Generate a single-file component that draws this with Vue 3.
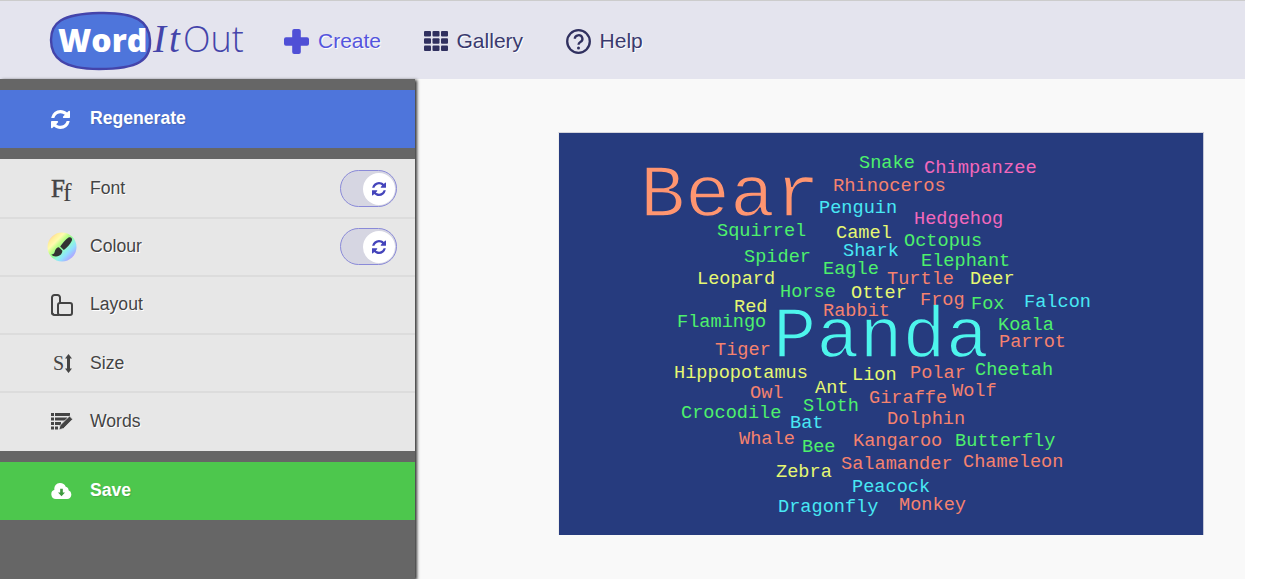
<script setup>
// Word cloud layout: x = left edge, y = baseline, both relative to the canvas.
const green = '#4df06c'
const salmon = '#f5826e'
const cyan = '#48e8f4'
const pink = '#f268bc'
const yellow = '#e6f872'
const raw = [
  ['Bear', 640, 216, 75, '#ff9570'], ['Panda', 773, 357, 72, '#4df5ec'],
  ['Snake', 859, 168, 18.6, green], ['Chimpanzee', 924, 173, 18.8, pink], ['Rhinoceros', 833, 191, 18.8, salmon],
  ['Penguin', 819, 213, 18.6, cyan], ['Hedgehog', 914, 224, 18.6, pink], ['Squirrel', 717, 236, 18.6, green],
  ['Camel', 836, 238, 18.6, yellow], ['Octopus', 904, 246, 18.6, green], ['Shark', 843, 256, 18.6, cyan],
  ['Spider', 744, 262, 18.6, green], ['Elephant', 921, 266, 18.6, green], ['Eagle', 823, 274, 18.6, green],
  ['Leopard', 697, 284, 18.6, yellow], ['Turtle', 887, 284, 18.6, salmon], ['Deer', 970, 284, 18.6, yellow],
  ['Horse', 780, 297, 18.6, green], ['Otter', 851, 298, 18.6, yellow], ['Frog', 920, 305, 18.6, salmon],
  ['Fox', 971, 309, 18.6, green], ['Falcon', 1024, 307, 18.6, cyan], ['Red', 734, 312, 18.6, yellow],
  ['Rabbit', 823, 316, 18.6, salmon], ['Flamingo', 677, 327, 18.6, green], ['Koala', 998, 330, 18.6, green],
  ['Parrot', 999, 347, 18.6, salmon], ['Tiger', 715, 355, 18.6, salmon], ['Hippopotamus', 674, 378, 18.6, yellow],
  ['Lion', 852, 380, 18.6, yellow], ['Polar', 910, 378, 18.6, salmon], ['Cheetah', 975, 375, 18.6, green],
  ['Owl', 750, 398, 18.6, salmon], ['Ant', 815, 393, 18.6, yellow], ['Giraffe', 869, 403, 18.6, salmon],
  ['Wolf', 952, 396, 18.6, salmon], ['Sloth', 803, 411, 18.6, green], ['Crocodile', 681, 418, 18.6, green],
  ['Bat', 790, 428, 18.6, cyan], ['Dolphin', 887, 424, 18.6, salmon], ['Whale', 739, 444, 18.6, salmon],
  ['Bee', 802, 452, 18.6, green], ['Kangaroo', 853, 446, 18.6, salmon], ['Butterfly', 955, 446, 18.6, green],
  ['Salamander', 841, 469, 18.6, salmon], ['Chameleon', 963, 467, 18.6, salmon], ['Zebra', 776, 477, 18.6, yellow],
  ['Peacock', 852, 492, 18.6, cyan], ['Monkey', 899, 510, 18.6, salmon], ['Dragonfly', 778, 512, 18.6, cyan],
]
const words = raw.map(([text, x, y, size, fill]) => ({ text, x: x - 559, y: y - 133, size, fill, big: size > 30 }))

const refresh = 'M1639 1056q0 5-1 7-64 268-268 434.5t-478 166.5q-146 0-282.5-55t-243.5-157l-129 129q-19 19-45 19t-45-19-19-45v-448q0-26 19-45t45-19h448q26 0 45 19t19 45-19 45l-137 137q71 66 161 102t187 36q134 0 250-65t186-179q11-17 53-117 8-23 30-23h192q13 0 22.5 9.5t9.5 22.5zm25-800v448q0 26-19 45t-45 19h-448q-26 0-45-19t-19-45 19-45l138-138q-148-137-349-137-134 0-250 65t-186 179q-11 17-53 117-8 23-30 23h-199q-13 0-22.5-9.5t-9.5-22.5v-7q65-268 270-434.5t480-166.5q146 0 284 55.5t245 156.5l130-129q19-19 45-19t45 19 19 45z'
</script>

<template>
  <div class="page">
    <header class="topbar">
      <svg class="logo" width="196" height="62" viewBox="0 0 196 62">
        <path d="M2 30C2 13 12 4 50 3C88 2 100 12 101 30C102 50 90 59 50 59C14 59 2 48 2 30Z" fill="#4e75db" stroke="#4444aa" stroke-width="2.4" />
        <text x="9" y="42" class="logo-word">Word</text>
        <text x="104" y="42" class="logo-it">It</text>
        <text x="134" y="42" class="logo-out">Out</text>
      </svg>
      <nav class="nav">
        <a class="nav-item create">
          <svg width="25" height="25" viewBox="0 0 25 25"><path d="M10.200 0h4.600a2 2 0 0 1 2 2v6.200H23a2 2 0 0 1 2 2v4.600a2 2 0 0 1-2 2h-6.200V23a2 2 0 0 1-2 2h-4.600a2 2 0 0 1-2-2v-6.200H2a2 2 0 0 1-2-2v-4.600a2 2 0 0 1 2-2h6.200V2a2 2 0 0 1 2-2z" fill="#4f4fd6" /></svg>
          Create
        </a>
        <a class="nav-item">
          <svg width="24" height="20" viewBox="0 0 24 20" fill="#30305f">
            <rect x="0" y="0" width="7" height="5.600" rx="1" /><rect x="8.500" y="0" width="7" height="5.600" rx="1" /><rect x="17" y="0" width="7" height="5.600" rx="1" />
            <rect x="0" y="7.200" width="7" height="5.600" rx="1" /><rect x="8.500" y="7.200" width="7" height="5.600" rx="1" /><rect x="17" y="7.200" width="7" height="5.600" rx="1" />
            <rect x="0" y="14.400" width="7" height="5.600" rx="1" /><rect x="8.500" y="14.400" width="7" height="5.600" rx="1" /><rect x="17" y="14.400" width="7" height="5.600" rx="1" />
          </svg>
          Gallery
        </a>
        <a class="nav-item">
          <svg width="25" height="25" viewBox="0 0 25 25" fill="none" stroke="#30305f">
            <circle cx="12.500" cy="12.500" r="11.300" stroke-width="2.300" />
            <path d="M8.800 9.800a3.800 3.600 0 1 1 5.600 3.200c-1.300.8-1.900 1.300-1.900 2.800" stroke-width="2.300" />
            <circle cx="12.500" cy="18.900" r="1.500" fill="#30305f" stroke="none" />
          </svg>
          Help
        </a>
      </nav>
    </header>

    <div class="body-row">
      <aside class="sidebar">
        <button class="action regen">
          <svg class="act-icon" width="19" height="19" viewBox="128 128 1536 1536"><path :d="refresh" fill="#fff" /></svg>
          <span class="act-label">Regenerate</span>
        </button>

        <div class="menu">
          <div class="row">
            <span class="icon ff"><b>F</b><i>f</i></span>
            <span>Font</span>
            <span class="toggle"><span class="knob"><svg width="14" height="14" viewBox="128 128 1536 1536"><path :d="refresh" fill="#4444bb" /></svg></span></span>
          </div>
          <div class="row">
            <span class="icon">
              <svg class="rainbow" width="30" height="30" viewBox="0 0 30 30">
                <defs>
                  <linearGradient id="rb" x1="0" y1="0" x2="1" y2="1">
                    <stop offset="0" stop-color="#ffa898" /><stop offset=".12" stop-color="#ffd0a0" /><stop offset=".2" stop-color="#fff09a" />
                    <stop offset=".3" stop-color="#fffbb0" /><stop offset=".4" stop-color="#c0ff88" /><stop offset=".5" stop-color="#90fa90" />
                    <stop offset=".6" stop-color="#90f8d8" /><stop offset=".7" stop-color="#90e0ff" /><stop offset=".82" stop-color="#a8b0ff" />
                    <stop offset="1" stop-color="#e090ff" />
                  </linearGradient>
                </defs>
                <circle cx="15" cy="15" r="14.500" fill="url(#rb)" />
                <path d="M21.500 5.500c2.200-1.200 4.300.9 3.300 3.200-1.500 3.300-4.700 6.900-8 9.300l-3.600-3.600C15.600 11.300 18.500 7.400 21.500 5.500z" fill="#333" />
                <path d="M11.900 15.300l3.500 3.500c-.2 3.400-2.900 5.700-6.500 5.700-2 0-3.700-.8-4.600-2 2.200 0 3-1 3.400-2.800.5-2.500 2.400-4.400 4.200-4.400z" fill="#333" />
              </svg>
            </span>
            <span>Colour</span>
            <span class="toggle"><span class="knob"><svg width="14" height="14" viewBox="128 128 1536 1536"><path :d="refresh" fill="#4444bb" /></svg></span></span>
          </div>
          <div class="row">
            <span class="icon">
              <svg width="22" height="22" viewBox="0 0 22 22" fill="none" stroke="#444" stroke-width="2">
                <path d="M3 20.500A2 2 0 0 1 1 18.500V3.500A2.500 2.500 0 0 1 3.500 1h3A2.500 2.500 0 0 1 9 3.500V9" />
                <rect x="7" y="9" width="14" height="12" rx="2" />
                <path d="M1 18.500A2.500 2.500 0 0 0 3.500 21H8" />
              </svg>
            </span>
            <span>Layout</span>
          </div>
          <div class="row size-row">
            <span class="icon size-icon">
              <span>S</span>
              <svg width="7" height="19" viewBox="0 0 7 19" fill="#444"><path d="M3.500 0L7 4.500H5v10h2L3.500 19 0 14.500h2v-10H0z" /></svg>
            </span>
            <span>Size</span>
          </div>
          <div class="row">
            <span class="icon">
              <svg width="22" height="17" viewBox="0 0 22 17" fill="#444">
                <rect x="0" y="0" width="3" height="3" /><rect x="4" y="0" width="15" height="3" />
                <rect x="0" y="4.500" width="3" height="3" /><rect x="4" y="4.500" width="12" height="3" />
                <rect x="0" y="9" width="3" height="3" /><rect x="4" y="9" width="6" height="3" />
                <rect x="0" y="13.500" width="3" height="3" /><rect x="4" y="13.500" width="3" height="3" />
                <path d="M18.500 3l3.200 3.200-9.200 9.300-4.700 1.400 1.300-4.600z" stroke="#e7e7e7" stroke-width=".8" />
              </svg>
            </span>
            <span>Words</span>
          </div>
        </div>

        <button class="action save">
          <svg class="act-icon" width="21" height="16" viewBox="0 0 22 17">
            <path d="M5 17a5 5 0 0 1-1.500-9.700A6 6 0 0 1 9.500 0a6.500 6.500 0 0 1 6 4 3.800 3.800 0 0 1 3 3.800A4.800 4.800 0 0 1 17 17z" fill="#fff" />
            <path d="M9.600 6h2.800v4.200h2.300L11 14.200l-3.700-4h2.300z" fill="#3f9a3f" />
          </svg>
          <span class="act-label">Save</span>
        </button>
      </aside>

      <main class="stage">
        <div class="canvas">
          <svg class="cloud" width="644" height="402" viewBox="0 0 644 402">
            <text
              v-for="w in words"
              :key="w.text"
              :class="{ big: w.big }"
              :x="w.x"
              :y="w.y"
              :font-size="w.size"
              :fill="w.fill"
            >{{ w.text }}</text>
          </svg>
        </div>
      </main>
    </div>
  </div>
</template>

<style>
html, body { background: #fff; }
</style>

<style scoped>
.page {
  width: 1245px;
  height: 579px;
  overflow: hidden;
  font-family: "Liberation Sans", Arial, sans-serif;
  display: flex;
  flex-direction: column;
}
.topbar {
  height: 78px;
  flex: none;
  border-top: 1px solid #ccc;
  background: #e4e4ee;
  display: flex;
  align-items: center;
  padding-left: 49px;
}
.logo { display: block; margin-top: 1px; }
.logo-word { font-family: "Open Sans", sans-serif; font-weight: 800; font-size: 32px; fill: #fff; }
.logo-it { font-family: "Liberation Serif", serif; font-style: italic; font-size: 39px; letter-spacing: 3px; fill: #4444aa; }
.logo-out { font-family: "Open Sans", sans-serif; font-weight: 300; font-size: 36px; fill: #4444aa; }
.nav {
  display: flex;
  align-items: center;
  gap: 42.500px;
  margin-left: 39px;
  padding-top: 2px;
}
.nav-item {
  display: flex;
  align-items: center;
  gap: 9px;
  font-size: 21px;
  color: #3a3a6e;
  text-shadow: 1px 1px 0 #fff;
}
.nav-item.create { color: #5555dd; }
.body-row {
  flex: 1;
  display: flex;
  background: #f9f9f9;
  min-height: 0;
}
.sidebar {
  width: 415px;
  flex: none;
  background: #666;
  padding: 11px 0 0;
  box-shadow: 2px 1px 3px #333;
  box-sizing: border-box;
}
.action {
  display: flex;
  align-items: center;
  width: 100%;
  height: 58px;
  border: 0;
  padding: 0 0 0 51px;
  color: #fff;
  font: bold 17.600px "Liberation Sans", Arial, sans-serif;
  text-shadow: 1px 1px 1px #3333;
}
.regen { background: #4e75db; }
.save { background: #4dc74d; }
.act-icon { flex: none; }
.regen .act-label { margin: -2px 0 0 20px; }
.save .act-label { margin: -2px 0 0 18px; }
.menu {
  margin: 11px 0;
  background: #e7e7e7;
}
.row {
  height: 58px;
  box-sizing: border-box;
  display: flex;
  align-items: center;
  font-size: 17.600px;
  color: #444;
  text-shadow: 1px 1px 0 #fff;
  padding-right: 18px;
  border-bottom: 2px solid #dcdcdc;
}
.row:first-child { height: 59.500px; padding-top: 1.500px; }
.size-row { padding-top: 1.500px; }
.row:last-child { height: 58.500px; border-bottom: 0; }
.icon {
  width: 90px;
  flex: none;
  box-sizing: border-box;
  padding-left: 47px;
  display: flex;
  align-items: center;
  text-shadow: none;
}
.icon svg { margin-left: 4px; }
.icon svg.rainbow { margin-left: 0; }
.ff { font-family: "Liberation Serif", serif; color: #444; padding-left: 51px; }
.ff b { font-size: 25px; font-weight: 400; -webkit-text-stroke: .5px #444; }
.ff i { font-style: normal; font-size: 26px; transform: translate(-2px, 4px); }
.size-icon { font-family: "Liberation Serif", serif; font-size: 20px; padding-left: 53px; }
.size-icon svg { margin-left: 1px; }
.toggle {
  margin-left: auto;
  width: 57px;
  height: 37px;
  box-sizing: border-box;
  border: 1px solid #8a8ad8;
  border-radius: 19px;
  background: #d6d6e2;
  display: flex;
  align-items: center;
  justify-content: flex-end;
  padding-right: 1px;
}
.knob {
  width: 32px;
  height: 32px;
  border-radius: 50%;
  background: #fff;
  display: flex;
  align-items: center;
  justify-content: center;
}
.stage {
  flex: 1;
  padding: 53px 0 0 143px;
}
.canvas {
  width: 646px;
  height: 403px;
  box-sizing: border-box;
  border-top: 1px solid #d4d4dc;
  border-left: 1px solid #eee;
  border-right: 1px solid #c4c8d8;
  background: #263b7e;
}
.cloud {
  display: block;
  font-family: "Liberation Mono", "Courier New", monospace;
}
.cloud .big {
  stroke: #263b7e;
  stroke-width: 1.500px;
}
</style>
